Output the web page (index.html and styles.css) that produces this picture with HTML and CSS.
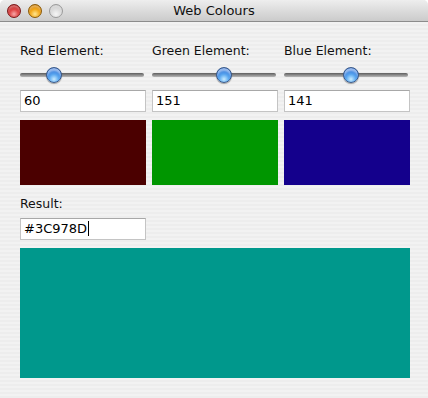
FILE: index.html
```html
<!DOCTYPE html>
<html>
<head>
<meta charset="utf-8">
<link rel="stylesheet" href="styles.css">
</head>
<body>
<div class="window">
  <div class="titlebar">
    <div class="lights">
      <span class="light close"></span>
      <span class="light min"></span>
      <span class="light zoom"></span>
    </div>
    <div class="title">Web Colours</div>
  </div>
  <div class="content">
    <div class="grid">
      <div class="col">
        <div class="label">Red Element:</div>
        <div class="slider"><div class="track"></div><div class="knob" style="left:26px"></div></div>
        <div class="field">60</div>
        <div class="swatch red"></div>
      </div>
      <div class="col">
        <div class="label">Green Element:</div>
        <div class="slider"><div class="track"></div><div class="knob" style="left:64px"></div></div>
        <div class="field">151</div>
        <div class="swatch green"></div>
      </div>
      <div class="col">
        <div class="label">Blue Element:</div>
        <div class="slider"><div class="track"></div><div class="knob" style="left:59px"></div></div>
        <div class="field">141</div>
        <div class="swatch blue"></div>
      </div>
    </div>
    <div class="label result-label">Result:</div>
    <div class="field result-field"><span class="caret">#3C978D</span></div>
    <div class="result"></div>
  </div>
</div>
</body>
</html>
```
FILE: styles.css
```css
html, body {
  margin: 0;
  padding: 0;
  background: #ffffff;
}
body {
  font-family: "DejaVu Sans", "Liberation Sans", sans-serif;
  font-size: 12px;
  color: #000;
}
.window {
  width: 428px;
  height: 398px;
  border-radius: 5px 5px 0 0;
  overflow: hidden;
  background: repeating-linear-gradient(to bottom, #ededed 0, #ededed 2px, #f2f2f2 2px, #f2f2f2 4px);
}
.titlebar {
  height: 21px;
  border-bottom: 1px solid #8c8c8c;
  background: linear-gradient(to bottom, #eeeeee 0%, #dcdcdc 50%, #cbcbcb 100%);
  display: flex;
  align-items: center;
  position: relative;
}
.lights {
  display: flex;
  gap: 7px;
  padding-left: 7px;
  padding-top: 1px;
}
.light {
  width: 14px;
  height: 14px;
  border-radius: 50%;
  box-sizing: border-box;
  display: block;
  box-shadow: inset 0 2px 2px rgba(255,255,255,0.35);
}
.close {
  background: radial-gradient(circle at 50% 75%, #f7a8a8 0%, #e04848 40%, #a81414 100%);
  border: 1px solid #7a1818;
}
.min {
  background: radial-gradient(circle at 50% 75%, #ffe690 0%, #f2a616 45%, #b86800 100%);
  border: 1px solid #8a5a08;
}
.zoom {
  background: radial-gradient(circle at 50% 75%, #f6f6f6 0%, #dadada 50%, #b4b4b4 100%);
  border: 1px solid #9a9a9a;
}
.title {
  position: absolute;
  left: 0;
  right: 0;
  top: 3px;
  text-align: center;
  font-size: 13px;
  color: #111;
  pointer-events: none;
}
.content {
  padding: 21px 18px 0 20px;
}
.grid {
  display: grid;
  grid-template-columns: 126px 126px 126px;
  column-gap: 6px;
}
.col {
  display: flex;
  flex-direction: column;
}
.label {
  height: 16px;
  line-height: 16px;
  font-size: 12.5px;
  color: #111;
}
.slider {
  position: relative;
  height: 18px;
  margin-top: 7px;
}
.track {
  position: absolute;
  left: 0;
  right: 2px;
  top: 7px;
  height: 4px;
  border-radius: 2px;
  background: linear-gradient(to bottom, #5e5e5e 0%, #8a8a8a 50%, #b8b8b8 100%);
}
.knob {
  position: absolute;
  top: 1px;
  width: 16px;
  height: 16px;
  box-sizing: border-box;
  border-radius: 50%;
  border: 1px solid #3a5a8a;
  background: radial-gradient(circle at 50% 80%, #c8ecff 0%, #5eaaf0 35%, #1f68d6 75%, #1c4fa8 100%);
  box-shadow: 0 1px 1px rgba(0,0,0,0.35), inset 0 3px 2px rgba(255,255,255,0.55);
}
.field {
  margin-top: 6px;
  height: 22px;
  box-sizing: border-box;
  background: #fff;
  border: 1px solid #c4c4c4;
  border-top-color: #a8a8a8;
  padding: 0 3px;
  line-height: 20px;
  font-size: 13px;
}
.swatch {
  margin-top: 8px;
  height: 65px;
}
.red { background: #4b0000; }
.green { background: #009600; }
.blue { background: #14008c; }
.result-label {
  margin-top: 11px;
}
.result-field {
  width: 126px;
  height: 22px;
}
.caret {
  border-right: 1px solid #000;
  padding-right: 1px;
}
.result {
  margin-top: 8px;
  height: 130px;
  background: #00988c;
}
```
